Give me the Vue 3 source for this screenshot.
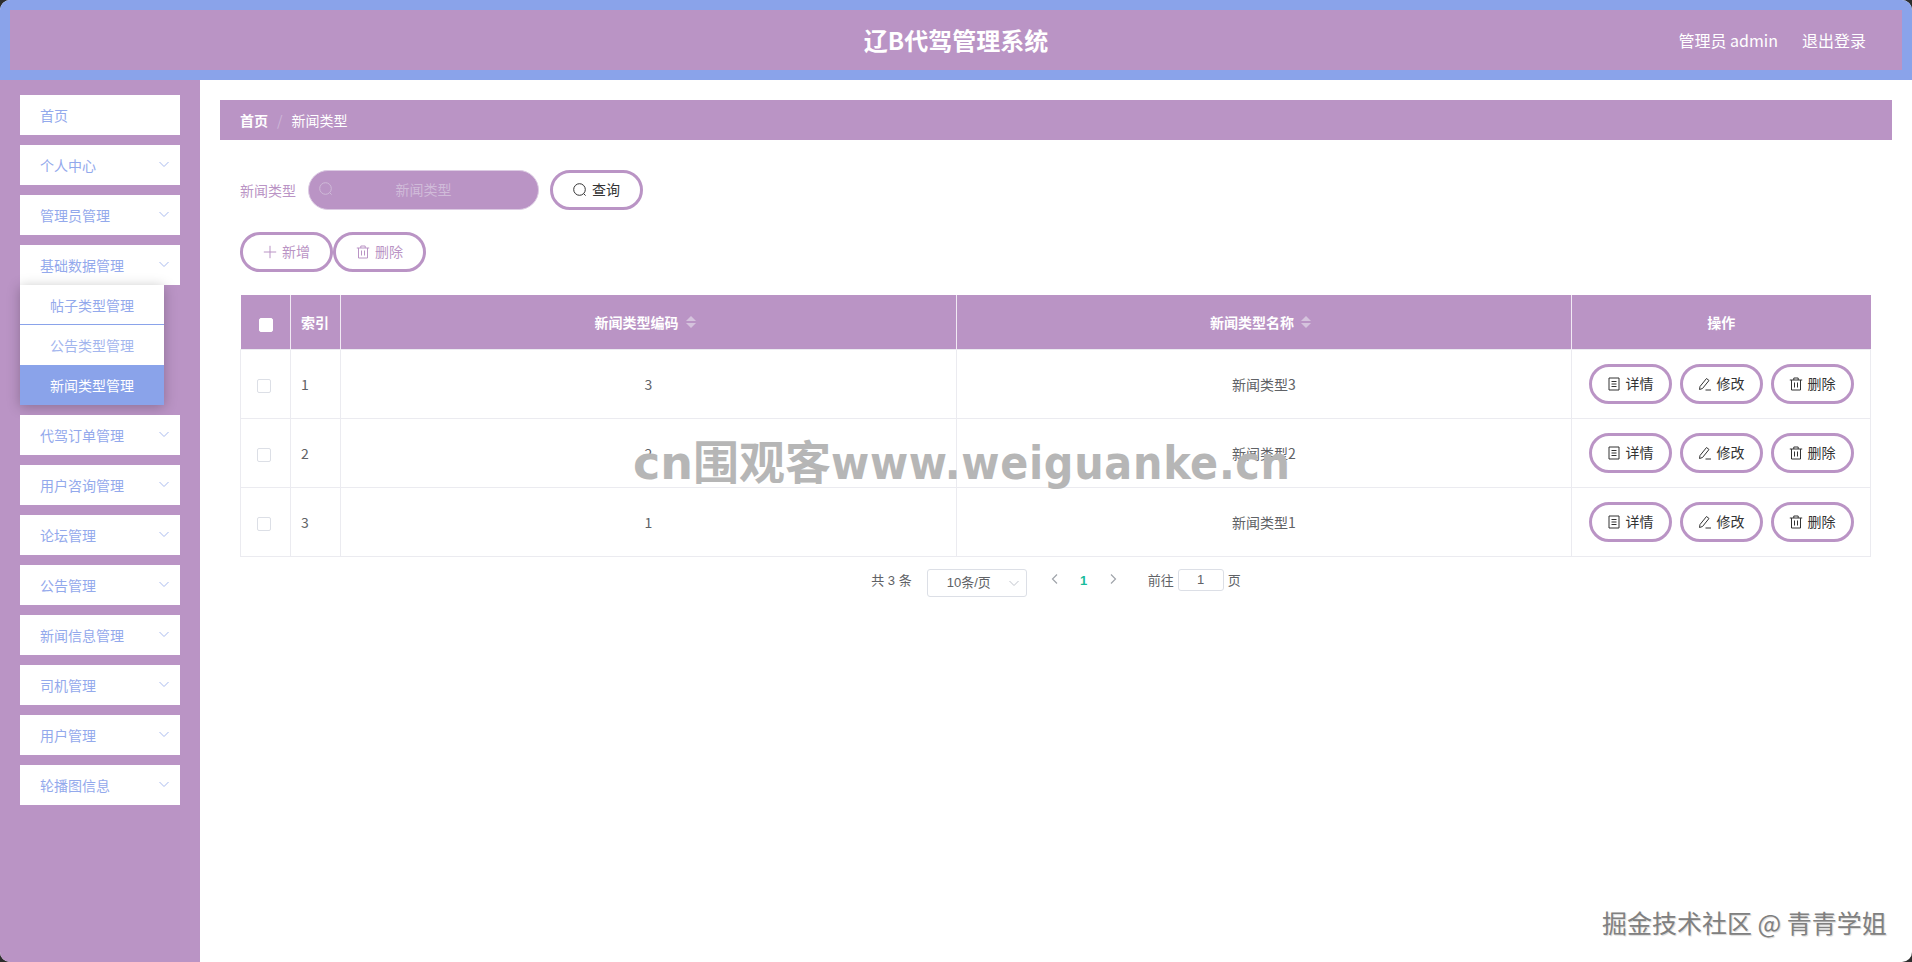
<template>
  <div class="app-shell">
    <header class="top-bar">
      <div class="top-inner">
        <h1 class="system-title">辽B代驾管理系统</h1>
        <div class="top-right">
          <span>管理员 admin</span>
          <span class="logout">退出登录</span>
        </div>
      </div>
    </header>

    <div class="body-row">
      <aside class="sidebar">
        <div v-for="menu in menus" :key="menu.name" class="menu-group">
          <div class="menu-item">
            <span>{{ menu.name }}</span>
            <svg v-if="menu.arrow" class="menu-arrow" viewBox="0 0 12 12">
              <path d="M1.5 4 L6 8.5 L10.5 4" />
            </svg>
          </div>
          <ul v-if="menu.children" class="submenu">
            <li
              v-for="child in menu.children"
              :key="child.name"
              :class="{ active: child.active }"
            >
              {{ child.name }}
            </li>
          </ul>
        </div>
      </aside>

      <main class="content">
        <div class="breadcrumb">
          <span class="crumb-home">首页</span>
          <span class="crumb-sep">/</span>
          <span>新闻类型</span>
        </div>

        <div class="panel">
          <div class="search-row">
            <label class="search-label">新闻类型</label>
            <div class="search-input">
              <svg class="icon search-icon" viewBox="0 0 14 14">
                <circle cx="6.5" cy="6.5" r="5.8" />
                <path d="M10.7 10.7 L12.6 12.6" />
              </svg>
              <span>新闻类型</span>
            </div>
            <button class="pill dark">
              <svg class="icon" viewBox="0 0 14 14">
                <circle cx="6.5" cy="6.5" r="5.8" />
                <path d="M10.7 10.7 L12.6 12.6" />
              </svg>
              查询
            </button>
          </div>

          <div class="action-row">
            <button class="pill soft">
              <svg class="icon" viewBox="0 0 14 14"><path d="M7 .8 V13.2 M.8 7 H13.2" /></svg>
              新增
            </button>
            <button class="pill soft">
              <svg class="icon" viewBox="0 0 14 14">
                <path d="M.8 3 H13.2 M2.5 3 V13 H11.5 V3 M4.8 3 V1 H9.2 V3 M5.5 5.5 V10.5 M8.5 5.5 V10.5" />
              </svg>
              删除
            </button>
          </div>

          <table class="data-table">
            <colgroup>
              <col style="width: 50px" />
              <col style="width: 50px" />
              <col style="width: 616px" />
              <col style="width: 615px" />
              <col />
            </colgroup>
            <thead>
              <tr>
                <th><span class="check head-check"></span></th>
                <th class="left">索引</th>
                <th>
                  <span class="th-inner">
                    新闻类型编码
                    <span class="sort"><i class="up"></i><i class="down"></i></span>
                  </span>
                </th>
                <th>
                  <span class="th-inner">
                    新闻类型名称
                    <span class="sort"><i class="up"></i><i class="down"></i></span>
                  </span>
                </th>
                <th>操作</th>
              </tr>
            </thead>
            <tbody>
              <tr v-for="(row, i) in rows" :key="row.code">
                <td><span class="check"></span></td>
                <td class="left">{{ i + 1 }}</td>
                <td>{{ row.code }}</td>
                <td>{{ row.name }}</td>
                <td>
                  <div class="row-actions">
                    <button class="pill dark small">
                      <svg class="icon" viewBox="0 0 14 14">
                        <path d="M2 1 H12 V13 H2 Z M4.5 4.5 H9.5 M4.5 7 H9.5 M4.5 9.5 H9.5" />
                      </svg>
                      详情
                    </button>
                    <button class="pill dark small">
                      <svg class="icon" viewBox="0 0 14 14">
                        <path d="M1.5 12.5 L2 9.5 L8.5 1.5 L11 3.5 L4.5 11.5 Z M7.5 13 H13" />
                      </svg>
                      修改
                    </button>
                    <button class="pill dark small">
                      <svg class="icon" viewBox="0 0 14 14">
                        <path d="M.8 3 H13.2 M2.5 3 V13 H11.5 V3 M4.8 3 V1 H9.2 V3 M5.5 5.5 V10.5 M8.5 5.5 V10.5" />
                      </svg>
                      删除
                    </button>
                  </div>
                </td>
              </tr>
            </tbody>
          </table>

          <div class="pagination">
            <span class="total">共 3 条</span>
            <div class="page-size">
              <span>10条/页</span>
              <svg viewBox="0 0 12 12"><path d="M1.5 4 L6 8.5 L10.5 4" /></svg>
            </div>
            <svg class="page-arrow" viewBox="0 0 12 12"><path d="M8 1.5 L3.5 6 L8 10.5" /></svg>
            <span class="page-current">1</span>
            <svg class="page-arrow" viewBox="0 0 12 12"><path d="M4 1.5 L8.5 6 L4 10.5" /></svg>
            <span class="goto">前往</span>
            <div class="page-input">1</div>
            <span class="page-unit">页</span>
          </div>
        </div>
      </main>
    </div>

    <div class="mark-site">cn围观客<span class="mark-latin">www.weiguanke.cn</span></div>
    <div class="mark-author">掘金技术社区 @ 青青学姐</div>
  </div>
</template>

<script setup>
const menus = [
  { name: '首页' },
  { name: '个人中心', arrow: true },
  { name: '管理员管理', arrow: true },
  {
    name: '基础数据管理',
    arrow: true,
    children: [
      { name: '帖子类型管理' },
      { name: '公告类型管理' },
      { name: '新闻类型管理', active: true },
    ],
  },
  { name: '代驾订单管理', arrow: true },
  { name: '用户咨询管理', arrow: true },
  { name: '论坛管理', arrow: true },
  { name: '公告管理', arrow: true },
  { name: '新闻信息管理', arrow: true },
  { name: '司机管理', arrow: true },
  { name: '用户管理', arrow: true },
  { name: '轮播图信息', arrow: true },
]

const rows = [
  { code: 3, name: '新闻类型3' },
  { code: 2, name: '新闻类型2' },
  { code: 1, name: '新闻类型1' },
]
</script>

<style>
html,
body {
  margin: 0;
  background: #2d2d2d;
}
</style>

<style scoped>
.app-shell {
  position: relative;
  width: 1912px;
  height: 962px;
  overflow: hidden;
  border-radius: 10px;
  background: #fff;
  font-family: "Noto Sans CJK SC", "Noto Sans", sans-serif;
  font-size: 14px;
  color: #606266;
}

.top-bar {
  height: 80px;
  box-sizing: border-box;
  padding: 10px;
  background: #8aa3ea;
}

.top-inner {
  position: relative;
  height: 60px;
  display: flex;
  align-items: center;
  justify-content: flex-end;
  padding-right: 36px;
  background: #ba94c5;
  color: #fff;
}

.system-title {
  position: absolute;
  left: 0;
  right: 0;
  margin: 0;
  text-align: center;
  font-size: 24px;
  font-weight: 700;
  line-height: 60px;
}

.top-right {
  position: relative;
  display: flex;
  gap: 24px;
  font-size: 16px;
}

.body-row {
  display: flex;
  height: 882px;
}

.sidebar {
  width: 200px;
  flex: none;
  box-sizing: border-box;
  padding: 15px 20px 0;
  background: #ba94c5;
}

.menu-group {
  margin-bottom: 10px;
}

.menu-item {
  height: 40px;
  display: flex;
  align-items: center;
  justify-content: space-between;
  padding: 0 10px 0 20px;
  background: #fff;
  color: #93a9ec;
}

.menu-arrow {
  width: 12px;
  height: 12px;
  margin-top: -3px;
  fill: none;
  stroke: #a9bbef;
  stroke-width: 1;
}

.submenu {
  width: 144px;
  margin: 0;
  padding: 0;
  list-style: none;
  background: #fff;
  box-shadow: 0 2px 12px rgba(0, 0, 0, 0.25);
}

.submenu li {
  height: 40px;
  box-sizing: border-box;
  line-height: 40px;
  text-align: center;
  color: #a3b6ee;
}

.submenu li:first-child {
  color: #93a9ec;
  border-bottom: 1px solid #8aa3ea;
}

.submenu li.active {
  background: #8aa3ea;
  color: #fff;
}

.content {
  flex: 1;
  padding: 20px 20px 0;
}

.breadcrumb {
  height: 40px;
  display: flex;
  align-items: center;
  padding-left: 20px;
  background: #ba94c5;
  color: #fff;
}

.crumb-home {
  font-weight: 700;
}

.crumb-sep {
  margin: 0 9px;
  color: #cdb6d8;
}

.panel {
  padding: 30px 20px 0;
}

.search-row {
  display: flex;
  align-items: center;
  height: 40px;
}

.search-label {
  width: 68px;
  color: #ba94c5;
}

.search-input {
  position: relative;
  width: 231px;
  height: 40px;
  box-sizing: border-box;
  border: 1px solid #dccbe3;
  border-radius: 20px;
  background: #ba94c5;
  color: #d0bbd9;
  line-height: 36px;
  text-align: center;
}

.search-icon {
  position: absolute;
  left: 10px;
  top: 11px;
  color: #cfbad8;
}

.pill {
  height: 40px;
  box-sizing: border-box;
  display: inline-flex;
  align-items: center;
  justify-content: center;
  gap: 5px;
  padding: 0 0 2px;
  border: 3px solid #ba94c5;
  border-radius: 20px;
  background: #fff;
  font-family: inherit;
  font-size: 14px;
}

.pill .icon {
  margin-top: 2px;
}

.search-row .pill {
  width: 93px;
  margin-left: 11px;
}

.pill.dark {
  color: #333;
}

.pill.soft {
  width: 93px;
  color: #ba94c5;
}

.icon {
  width: 14px;
  height: 14px;
  flex: none;
  fill: none;
  stroke: currentColor;
  stroke-width: 1;
}

.action-row {
  display: flex;
  margin-top: 22px;
}

.data-table {
  width: 1631px;
  margin-top: 23px;
  border-collapse: collapse;
  table-layout: fixed;
}

.data-table th {
  height: 54px;
  padding: 0;
  background: #ba94c5;
  border-left: 1px solid #f1eaf4;
  color: #fff;
  font-weight: 700;
  text-align: center;
  white-space: nowrap;
}

.data-table th:first-child {
  border-left: none;
}

.data-table td {
  height: 69px;
  box-sizing: border-box;
  padding: 0;
  border: 1px solid #ebebf0;
  text-align: center;
}

.data-table .left {
  padding-left: 10px;
  text-align: left;
}

.check {
  display: inline-block;
  width: 14px;
  height: 14px;
  box-sizing: border-box;
  margin-right: 4px;
  border: 1px solid #dcdfe6;
  border-radius: 2px;
  background: #fff;
  vertical-align: middle;
}

.head-check {
  margin: 1px 0 0 2px;
  border-color: #fff;
}

.th-inner {
  display: inline-flex;
  align-items: center;
  margin-top: -5px;
  margin-right: 7px;
  vertical-align: middle;
}

.sort {
  display: inline-flex;
  flex-direction: column;
  gap: 2px;
  margin-left: 7px;
}

.sort i {
  display: block;
  width: 0;
  height: 0;
  border-left: 5px solid transparent;
  border-right: 5px solid transparent;
}

.sort .up {
  border-bottom: 5px solid #d5c3dd;
}

.sort .down {
  border-top: 5px solid #d5c3dd;
}

.row-actions {
  display: flex;
  justify-content: center;
  gap: 8px;
}

.pill.small {
  width: 83px;
}

.pagination {
  display: flex;
  align-items: flex-start;
  justify-content: center;
  margin-top: 12px;
  font-family: "Liberation Sans", "Noto Sans CJK SC", sans-serif;
  font-size: 13px;
  line-height: 24px;
}

.total {
  margin-right: 15px;
}

.page-size {
  width: 100px;
  height: 28px;
  box-sizing: border-box;
  display: flex;
  align-items: center;
  justify-content: space-between;
  margin-right: 22px;
  padding: 0 6px 0 19px;
  border: 1px solid #dcdfe6;
  border-radius: 3px;
}

.page-size svg {
  width: 12px;
  height: 12px;
  fill: none;
  stroke: #c0c4cc;
  stroke-width: 1;
}

.page-arrow {
  width: 12px;
  height: 12px;
  margin-top: 4px;
  fill: none;
  stroke: #a0a4ab;
  stroke-width: 1.2;
}

.page-current {
  width: 46px;
  text-align: center;
  color: #1abc9c;
  font-weight: 700;
}

.goto {
  margin-left: 29px;
}

.page-input {
  width: 46px;
  height: 22px;
  box-sizing: border-box;
  margin: 0 4px;
  border: 1px solid #dcdfe6;
  border-radius: 3px;
  line-height: 20px;
  text-align: center;
}

.mark-site {
  position: absolute;
  left: 633px;
  top: 432px;
  font-family: "DejaVu Sans", "Noto Sans CJK SC", sans-serif;
  font-size: 46px;
  font-weight: 700;
  line-height: 62px;
  color: #b6b6b6;
  white-space: nowrap;
  pointer-events: none;
}

.mark-latin {
  font-stretch: condensed;
  letter-spacing: 0.7px;
}

.mark-author {
  position: absolute;
  left: 1602px;
  top: 904px;
  font-size: 25px;
  line-height: 36px;
  color: #808080;
  text-shadow: 1px 1px 1px #d8d8d8;
  white-space: nowrap;
  pointer-events: none;
}
</style>
